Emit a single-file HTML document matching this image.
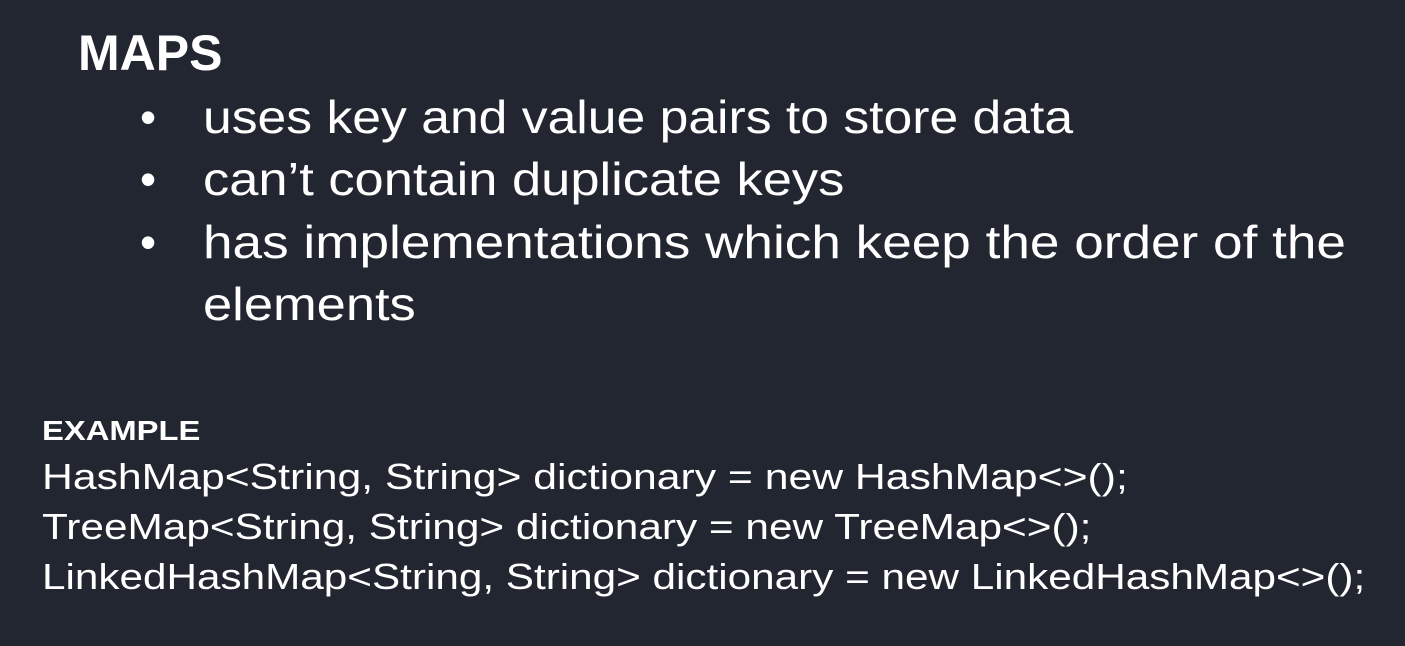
<!DOCTYPE html>
<html><head><meta charset="utf-8"><style>
body{margin:0;width:1405px;height:646px;background:#222631;overflow:hidden;font-family:"Liberation Sans",sans-serif;color:#fff}
.t{position:absolute;white-space:nowrap;line-height:1;transform-origin:0 0}
.b{transform:scaleX(1.14)}
</style></head><body>
<div class="t" style="left:78px;top:28px;font-size:50px;font-weight:bold">MAPS</div>
<div class="t" style="left:140px;top:94px;font-size:46px">•</div>
<div class="t" style="left:140px;top:156px;font-size:46px">•</div>
<div class="t" style="left:140px;top:219px;font-size:46px">•</div>
<div class="t b" style="left:203px;top:94px;font-size:46px;transform:scaleX(1.123)">uses key and value pairs to store data</div>
<div class="t b" style="left:203px;top:156px;font-size:46px">can’t contain duplicate keys</div>
<div class="t b" style="left:203px;top:219px;font-size:46px;transform:scaleX(1.155)">has implementations which keep the order of the</div>
<div class="t b" style="left:203px;top:281px;font-size:46px">elements</div>
<div class="t" style="left:42px;top:417px;font-size:28px;font-weight:bold;transform:scaleX(1.17)">EXAMPLE</div>
<div class="t" style="left:42px;top:459px;font-size:35px;transform:scale(1.22,1.04)">HashMap&lt;String, String&gt; dictionary = new HashMap&lt;&gt;();</div>
<div class="t" style="left:42px;top:509px;font-size:35px;transform:scale(1.21,1.04)">TreeMap&lt;String, String&gt; dictionary = new TreeMap&lt;&gt;();</div>
<div class="t" style="left:42px;top:559px;font-size:35px;transform:scale(1.207,1.04)">LinkedHashMap&lt;String, String&gt; dictionary = new LinkedHashMap&lt;&gt;();</div>
</body></html>
